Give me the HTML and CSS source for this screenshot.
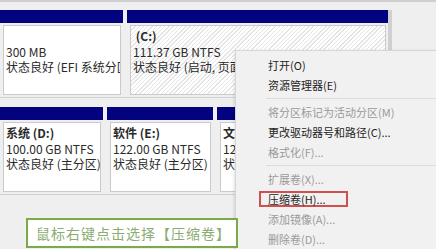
FILE: index.html
```html
<!DOCTYPE html>
<html lang="zh-CN">
<head>
<meta charset="utf-8">
<link rel="stylesheet" href="styles.css">
</head>
<body>
<div class="screen">
  <div class="disks">
    <div class="disk disk1">
      <div class="part p-efi">
        <div class="hdr"></div>
        <div class="body">
          <div class="line">&nbsp;</div>
          <div class="line">300 MB</div>
          <div class="line">状态良好 (EFI 系统分区)</div>
        </div>
      </div>
      <div class="part p-c">
        <div class="hdr"></div>
        <div class="body hatched">
          <div class="line name">&nbsp;(C:)</div>
          <div class="line">111.37 GB NTFS</div>
          <div class="line">状态良好 (启动, 页面文件, 故障转储, 主分区)</div>
        </div>
      </div>
    </div>
    <div class="disk disk2">
      <div class="part p-d">
        <div class="hdr"></div>
        <div class="body">
          <div class="line name">系统 (D:)</div>
          <div class="line">100.00 GB NTFS</div>
          <div class="line">状态良好 (主分区)</div>
        </div>
      </div>
      <div class="part p-e">
        <div class="hdr"></div>
        <div class="body">
          <div class="line name">软件 (E:)</div>
          <div class="line">122.00 GB NTFS</div>
          <div class="line">状态良好 (主分区)</div>
        </div>
      </div>
      <div class="part p-f">
        <div class="hdr"></div>
        <div class="body">
          <div class="line name">文档 (F:)</div>
          <div class="line">125.00 GB NTFS</div>
          <div class="line">状态良好 (主分区)</div>
        </div>
      </div>
    </div>
  </div>

  <ul class="menu">
    <li class="item">打开(O)</li>
    <li class="item">资源管理器(E)</li>
    <li class="sep"></li>
    <li class="item off">将分区标记为活动分区(M)</li>
    <li class="item">更改驱动器号和路径(C)...</li>
    <li class="item off">格式化(F)...</li>
    <li class="sep"></li>
    <li class="item off">扩展卷(X)...</li>
    <li class="item"><span class="mark">压缩卷(H)...</span></li>
    <li class="item off">添加镜像(A)...</li>
    <li class="item off">删除卷(D)...</li>
  </ul>

  <div class="note">鼠标右键点击选择【压缩卷】</div>
</div>
</body>
</html>
```

FILE: styles.css
```css
* { box-sizing: border-box; }
html, body { margin: 0; padding: 0; }
body {
  width: 436px;
  height: 249px;
  overflow: hidden;
  background: #f0efef;
  font-family: "Noto Sans CJK SC", "Noto Sans", sans-serif;
  color: #222;
}
.screen {
  position: relative;
  width: 436px;
  height: 249px;
  overflow: hidden;
  border-top: 2px solid #cfcfcf;
}
.disks {
  display: flex;
  flex-direction: column;
  padding-top: 8px;
}
.disk {
  display: flex;
  gap: 4px;
  padding-bottom: 2px;
  border-bottom: 1px solid #d2d2d2;
}
.disk1 { height: 88px; width: 392px; border-right: 4px solid #d0d0d0; }
.disk2 { margin-top: 9px; height: 88px; }
.part {
  display: flex;
  flex-direction: column;
  flex: none;
}
.hdr {
  height: 13px;
  background: #03037f;
}
.body {
  flex: 1;
  margin: 2px 2px 0 3px;
  border: 1px solid #cacaca;
  background: #fff;
  padding: 2px 0 0 2px;
  overflow: hidden;
  white-space: nowrap;
  font-size: 12px;
  line-height: 15.5px;
  color: #2a2a2a;
}
.hatched {
  background: repeating-linear-gradient(-45deg, #fff 0 2px, #e4e4e4 2px 3px);
}
.name { font-weight: bold; }
.p-efi { width: 123px; }
.p-c { width: 261px; }
.p-d { width: 103px; }
.p-e { width: 106px; }
.p-f { width: 110px; }

.menu {
  position: absolute;
  left: 235px;
  top: 48px;
  width: 205px;
  height: 201px;
  overflow: hidden;
  margin: 0;
  padding: 4px 0 0;
  list-style: none;
  background: #f2f1f1;
  border: 1px solid #d6d6d6;
  box-shadow: -1px 1px 3px rgba(0,0,0,0.12);
  font-size: 11px;
}
.item {
  height: 20px;
  line-height: 20px;
  padding-left: 32px;
  color: #1e1e1e;
  white-space: nowrap;
}
.item.off { color: #9a9a9a; }
.sep {
  height: 8px;
  margin-left: 30px;
  border-top: 1px solid #dcdcdc;
  position: relative;
  top: 3px;
}
.sep + .item { margin-top: -1px; }
.mark {
  display: inline-block;
  height: 16px;
  line-height: 13px;
  margin-left: -9px;
  padding: 0 20px 0 7px;
  border: 2px solid #d05050;
}

.note {
  position: absolute;
  left: 26px;
  top: 216px;
  width: 212px;
  height: 30px;
  border: 2px solid #79ab48;
  background: #fff;
  color: #8aac74;
  font-size: 14px;
  letter-spacing: 1px;
  line-height: 26px;
  padding-left: 8px;
  white-space: nowrap;
}
```
